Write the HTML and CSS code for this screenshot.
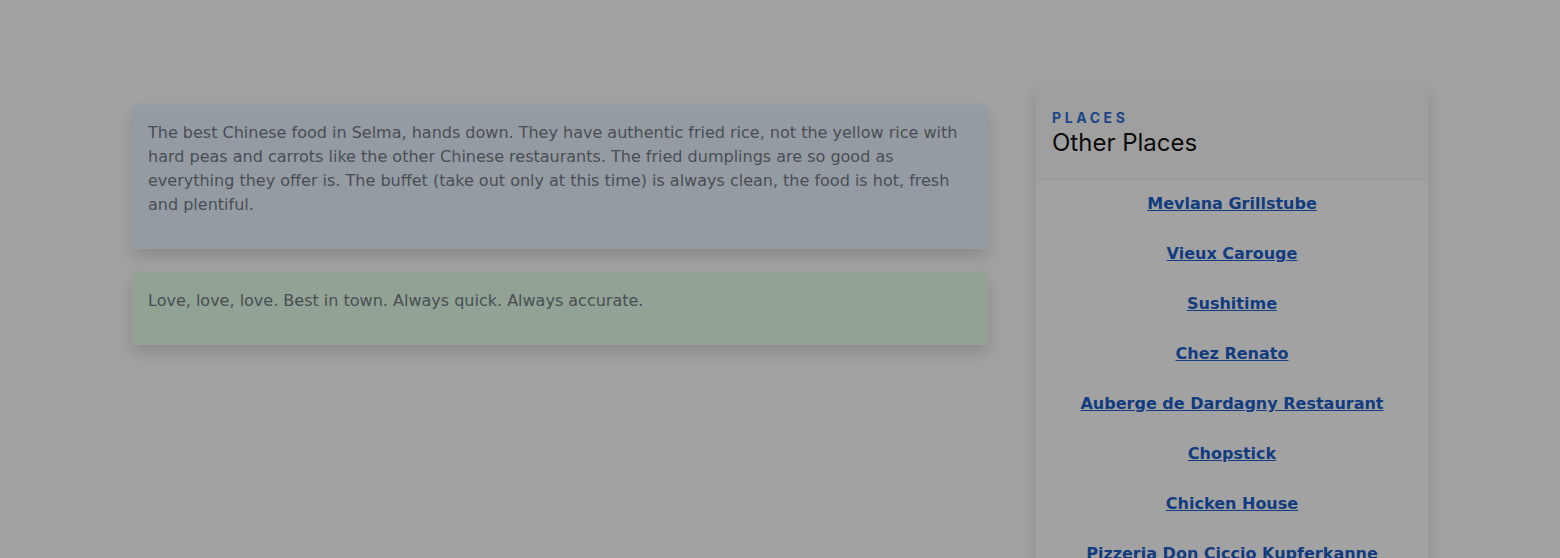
FILE: index.html
```html
<!DOCTYPE html>
<html lang="en">
<head>
    <meta charset="UTF-8">
    <meta name="viewport" content="width=device-width, initial-scale=1.0">
    <title>Reviews</title>
    <link rel="stylesheet" href="styles.css">
</head>
<body>

<div class="container">
  <main class="reviews">
    <div class="review review-blue">
      <p>The best Chinese food in Selma, hands down. They have authentic fried rice, not the yellow rice with hard peas and carrots like the other Chinese restaurants. The fried dumplings are so good as everything they offer is. The buffet (take out only at this time) is always clean, the food is hot, fresh and plentiful.</p>
    </div>
    <div class="review review-green">
      <p>Love, love, love. Best in town. Always quick. Always accurate.</p>
    </div>
  </main>

  <aside class="sidebar">
    <div class="sidebar-head">
      <span class="eyebrow">Places</span>
      <h3>Other Places</h3>
    </div>
    <ul class="place-list">
      <li><a href="#">Mevlana Grillstube</a></li>
      <li><a href="#">Vieux Carouge</a></li>
      <li><a href="#">Sushitime</a></li>
      <li><a href="#">Chez Renato</a></li>
      <li><a href="#">Auberge de Dardagny Restaurant</a></li>
      <li><a href="#">Chopstick</a></li>
      <li><a href="#">Chicken House</a></li>
      <li><a href="#">Pizzeria Don Ciccio Kupferkanne</a></li>
    </ul>
  </aside>
</div>

<div class="backdrop"></div>

</body>
</html>
```

FILE: styles.css
```css
body {
    margin: 0;
    font-family: "DejaVu Sans", sans-serif;
    font-size: 16px;
    line-height: 1.5;
    color: #212529;
    background: #fff;
    overflow: hidden;
}
.container {
    width: 1296px;
    margin: 0 auto;
    display: flex;
    gap: 48px;
    align-items: flex-start;
}
.reviews {
    width: 856px;
    margin-top: 105px;
    display: flex;
    flex-direction: column;
    gap: 24px;
}
.review {
    padding: 16px;
    box-shadow: 0 8px 16px rgba(0, 0, 0, 0.15);
    color: #737c86;
}
.review p {
    margin: 0 0 16px;
}
.review-blue {
    background: #ebf5ff;
}
.review-green {
    background: #e6ffe9;
}
.sidebar {
    width: 392px;
    margin-top: 85px;
    background: #fff;
    box-shadow: 0 8px 16px rgba(0, 0, 0, 0.15);
}
.sidebar-head {
    padding: 23px 16px 22px;
    background: #fafafa;
    border-bottom: 1px solid rgba(0, 0, 0, 0.05);
}
.eyebrow {
    display: block;
    font-family: Inter, sans-serif;
    font-size: 14px;
    line-height: 20px;
    font-weight: 700;
    letter-spacing: 3.6px;
    text-transform: uppercase;
    color: #2f6fd6;
}
.sidebar-head h3 {
    margin: 0;
    font-family: Inter, sans-serif;
    font-weight: 400;
    font-size: 24px;
    line-height: 29px;
    color: #111;
}
.place-list {
    list-style: none;
    margin: 0;
    padding: 12px 0 0;
    text-align: center;
}
.place-list li {
    margin-bottom: 26px;
    line-height: 24px;
}
.place-list a {
    color: #1c5fc9;
    font-weight: 700;
    text-decoration: underline;
}
.backdrop {
    position: fixed;
    inset: 0;
    background: rgba(0, 0, 0, 0.365);
}
```
